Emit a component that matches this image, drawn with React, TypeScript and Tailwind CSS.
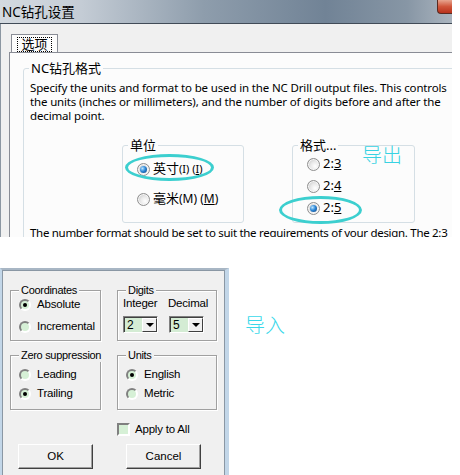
import type { ReactNode } from 'react'

const cjk = "font-['Noto_Sans','Noto_Sans_CJK_SC',sans-serif]"
const classic = "font-['Liberation_Sans',Arial,sans-serif]"

function AeroRadio({ checked }: { checked?: boolean }) {
  return (
    <span className="flex h-[13px] w-[13px] shrink-0 items-center justify-center rounded-full border border-[#8f8f8f] bg-[radial-gradient(circle_at_65%_65%,#ffffff_0%,#e8e8e8_45%,#bababa_100%)] shadow-[inset_0_0_0_1px_#f6f6f6]">
      {checked && (
        <span className="h-[7px] w-[7px] rounded-full bg-[radial-gradient(circle_at_35%_35%,#bfe6ff_0%,#2d88d8_45%,#0a3a78_100%)]" />
      )}
    </span>
  )
}

function AeroGroup({ label, className, children }: { label: string; className?: string; children: ReactNode }) {
  return (
    <div className={`relative rounded-[3px] border border-[#d5dfe5] ${className ?? ''}`}>
      <span className={`absolute -top-[9px] left-[5px] bg-[#fcfcfc] px-[2px] text-[13px] leading-[16px] text-black ${cjk}`}>
        {label}
      </span>
      {children}
    </div>
  )
}

function ClassicRadio({ checked }: { checked?: boolean }) {
  return (
    <span className="flex h-[12px] w-[12px] shrink-0 items-center justify-center rounded-full border-2 border-t-[#808080] border-l-[#808080] border-r-white border-b-white bg-[#d6f0d6]">
      {checked && <span className="h-[4px] w-[4px] rounded-full bg-black" />}
    </span>
  )
}

function ClassicGroup({ label, className, children }: { label: string; className?: string; children: ReactNode }) {
  return (
    <div className={`relative border border-[#a0a0a0] shadow-[inset_1px_1px_0_#ffffff,1px_1px_0_#ffffff] ${className ?? ''}`}>
      <span className="absolute -top-[8px] left-[8px] whitespace-nowrap bg-[#f0f0f0] px-[2px] text-[11px] leading-[14px] tracking-[-0.3px]">
        {label}
      </span>
      {children}
    </div>
  )
}

function Combo({ value }: { value: string }) {
  return (
    <div className="flex h-[17px] w-[35px] border border-t-[#808080] border-l-[#808080] border-r-white border-b-white">
      <div className="flex flex-1 border-t border-l border-[#404040]">
        <div className="flex flex-1 items-center bg-[#d4ecd4] pl-[2px] text-[12px] leading-none">{value}</div>
        <div className="flex w-[15px] items-center justify-center border border-t-white border-l-white border-r-[#404040] border-b-[#404040] bg-[#f0f0f0]">
          <span className="h-0 w-0 border-x-[4px] border-t-[4px] border-x-transparent border-t-black" />
        </div>
      </div>
    </div>
  )
}

function ClassicButton({ children }: { children: ReactNode }) {
  return (
    <button
      type="button"
      className="flex h-[25px] w-[75px] items-center justify-center border border-t-white border-l-white border-r-[#404040] border-b-[#404040] bg-[#f0f0f0] text-[11.5px] shadow-[inset_-1px_-1px_0_#a0a0a0]"
    >
      {children}
    </button>
  )
}

export default function App() {
  return (
    <div className="h-[475px] w-[460px] overflow-hidden bg-white">
      {/* NC drill setup dialog (Win7) */}
      <div className="relative flex h-[237px] w-[452px] flex-col overflow-hidden bg-[#f0f0f0]">
        <div className="flex h-[24px] shrink-0 items-start justify-between border-b border-[#414b57] bg-[linear-gradient(90deg,#d4dae0_0%,#c4ccd5_18%,#8e9dac_45%,#718396_72%,#8796a5_90%,#aab4be_100%)]">
          <span className={`pl-[2px] pt-[3px] text-[13.5px] leading-[18px] text-black ${cjk}`}>NC钻孔设置</span>
          <span className="h-[14px] w-[15px] rounded-bl-[4px] border-b border-l border-[#5a2a20] bg-[linear-gradient(180deg,#e7a58f_0%,#d0563b_50%,#b8321c_100%)]" />
        </div>

        <div className="flex flex-1 flex-col border-l border-[#8c97a2] pl-[8px] pt-[10px]">
          {/* tab */}
          <div className="ml-[2px] flex h-[19px] w-[47px] items-start justify-center border-x border-t border-[#898c95] bg-[#fcfcfc] pt-[2px]">
            <span className={`border border-dotted border-black px-[3px] text-[13px] leading-[13px] ${cjk}`}>选项</span>
          </div>

          {/* tab panel */}
          <div className="-mt-px flex flex-1 flex-col border-l border-t border-[#898c95] bg-[#fcfcfc] pl-[13px] pt-[15px]">
            <AeroGroup label="NC钻孔格式" className="w-[460px] pb-[20px] pl-[6px] pt-[12px]">
              <p className="whitespace-nowrap font-['Noto_Sans',sans-serif] text-[11.5px] leading-[14px] tracking-[-0.15px] text-black">
                Specify the units and format to be used in the NC Drill output files. This controls
                <br />
                the units (inches or millimeters), and the number of digits before and after the
                <br />
                decimal point.
              </p>

              <div className="ml-[92px] mt-[22px] flex gap-[48px]">
                <AeroGroup label="单位" className="h-[78px] w-[122px]">
                  <div className={`flex flex-col gap-[14px] pl-[14px] pt-[15px] text-[13px] ${cjk}`}>
                    <div className="flex h-[16px] items-center gap-[3px]">
                      <AeroRadio checked />
                      <span className="text-[13px]">
                        英寸<span className="text-[11px]">(I) (<u>I</u>)</span>
                      </span>
                    </div>
                    <div className="flex h-[16px] items-center gap-[3px]">
                      <AeroRadio />
                      <span className="text-[13px]">
                        毫米<span className="text-[12px]">(M) (<u>M</u>)</span>
                      </span>
                    </div>
                  </div>
                </AeroGroup>

                <AeroGroup label="格式..." className="h-[78px] w-[123px]">
                  <div className={`flex flex-col gap-[6px] pl-[14px] pt-[10px] text-[13px] ${cjk}`}>
                    <div className="flex h-[16px] items-center gap-[3px]">
                      <AeroRadio />
                      <span>
                        2:<u>3</u>
                      </span>
                    </div>
                    <div className="flex h-[16px] items-center gap-[3px]">
                      <AeroRadio />
                      <span>
                        2:<u>4</u>
                      </span>
                    </div>
                    <div className="flex h-[16px] items-center gap-[3px]">
                      <AeroRadio checked />
                      <span>
                        2:<u>5</u>
                      </span>
                    </div>
                  </div>
                </AeroGroup>
              </div>

              <p className="mt-[3px] whitespace-nowrap font-['Noto_Sans',sans-serif] text-[11.5px] leading-[14px] tracking-[-0.3px] text-black">
                The number format should be set to suit the requirements of your design. The 2:3
              </p>
            </AeroGroup>
          </div>
        </div>

        {/* annotations */}
        <span className="absolute left-[125px] top-[154px] h-[27px] w-[89px] rounded-[50%] border-[3px] border-[#3ccfcf]" />
        <span className="absolute left-[279px] top-[196px] h-[28px] w-[83px] rounded-[50%] border-[3px] border-[#3ccfcf]" />
        <span className={`absolute left-[362px] top-[144px] text-[20px] font-light leading-[24px] text-[#38d2e2] ${cjk}`}>导出</span>
      </div>

      {/* classic export dialog */}
      <div className="mt-[31px] flex items-start">
        <div className="flex h-[207px] w-[229px] border-l-2 border-r-4 border-t-2 border-[#c2d6e8] border-t-[#a8b6c4]">
          <div className={`flex flex-1 flex-col border-l border-r border-t border-[#8a97a4] bg-[#f0f0f0] pl-[7px] pt-[19px] text-black ${classic}`}>
            <div className="flex gap-[16px]">
              <ClassicGroup label="Coordinates" className="h-[51px] w-[91px]">
                <div className="flex flex-col gap-[8px] pl-[8px] pt-[7px] text-[11.5px] tracking-[-0.2px]">
                  <div className="flex h-[14px] items-center gap-[6px]">
                    <ClassicRadio checked />
                    <span>Absolute</span>
                  </div>
                  <div className="flex h-[14px] items-center gap-[6px]">
                    <ClassicRadio />
                    <span>Incremental</span>
                  </div>
                </div>
              </ClassicGroup>
              <ClassicGroup label="Digits" className="h-[51px] w-[100px]">
                <div className="flex pl-[5px] pt-[5px] text-[11.5px] tracking-[-0.2px]">
                  <div className="flex w-[45px] flex-col gap-[6px]">
                    <span className="leading-[14px]">Integer</span>
                    <Combo value="2" />
                  </div>
                  <div className="flex flex-col gap-[6px]">
                    <span className="leading-[14px]">Decimal</span>
                    <div className="ml-[1px]">
                      <Combo value="5" />
                    </div>
                  </div>
                </div>
              </ClassicGroup>
            </div>

            <div className="mt-[14px] flex gap-[16px]">
              <ClassicGroup label="Zero suppression" className="h-[55px] w-[91px]">
                <div className="flex flex-col gap-[5px] pl-[8px] pt-[12px] text-[11.5px] tracking-[-0.2px]">
                  <div className="flex h-[14px] items-center gap-[6px]">
                    <ClassicRadio />
                    <span>Leading</span>
                  </div>
                  <div className="flex h-[14px] items-center gap-[6px]">
                    <ClassicRadio checked />
                    <span>Trailing</span>
                  </div>
                </div>
              </ClassicGroup>
              <ClassicGroup label="Units" className="h-[55px] w-[100px]">
                <div className="flex flex-col gap-[5px] pl-[8px] pt-[12px] text-[11.5px] tracking-[-0.2px]">
                  <div className="flex h-[14px] items-center gap-[6px]">
                    <ClassicRadio checked />
                    <span>English</span>
                  </div>
                  <div className="flex h-[14px] items-center gap-[6px]">
                    <ClassicRadio />
                    <span>Metric</span>
                  </div>
                </div>
              </ClassicGroup>
            </div>

            <div className="ml-[107px] mt-[13px] flex h-[13px] items-center gap-[5px] text-[11.5px] tracking-[-0.2px]">
              <span className="h-[13px] w-[13px] border-2 border-t-[#808080] border-l-[#808080] border-r-white border-b-white bg-[#d6f0d6]" />
              <span>Apply to All</span>
            </div>

            <div className="ml-[8px] mt-[8px] flex gap-[33px]">
              <ClassicButton>OK</ClassicButton>
              <ClassicButton>Cancel</ClassicButton>
            </div>
          </div>
        </div>

        <span className={`ml-[16px] mt-[46px] text-[20px] font-light leading-[24px] text-[#38d8ea] ${cjk}`}>导入</span>
      </div>
    </div>
  )
}
